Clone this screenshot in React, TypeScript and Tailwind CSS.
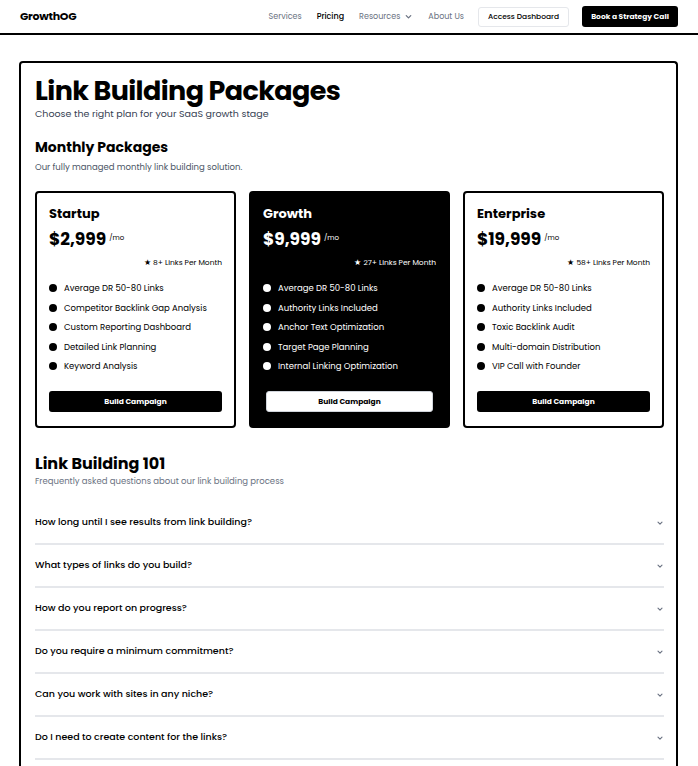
import React from "react";

const font = { fontFamily: "Poppins, 'Open Sans', 'Noto Sans', sans-serif" };

function Chevron({ className = "" }: { className?: string }) {
  return (
    <svg viewBox="0 0 10 10" className={className} fill="none" stroke="currentColor" strokeWidth="1.4" strokeLinecap="round" strokeLinejoin="round">
      <path d="M2.5 4l2.5 2.5L7.5 4" />
    </svg>
  );
}

type Plan = { name: string; price: string; links: string; features: string[]; dark?: boolean };

const plans: Plan[] = [
  {
    name: "Startup",
    price: "$2,999",
    links: "8+ Links Per Month",
    features: ["Average DR 50-80 Links", "Competitor Backlink Gap Analysis", "Custom Reporting Dashboard", "Detailed Link Planning", "Keyword Analysis"],
  },
  {
    name: "Growth",
    price: "$9,999",
    links: "27+ Links Per Month",
    dark: true,
    features: ["Average DR 50-80 Links", "Authority Links Included", "Anchor Text Optimization", "Target Page Planning", "Internal Linking Optimization"],
  },
  {
    name: "Enterprise",
    price: "$19,999",
    links: "58+ Links Per Month",
    features: ["Average DR 50-80 Links", "Authority Links Included", "Toxic Backlink Audit", "Multi-domain Distribution", "VIP Call with Founder"],
  },
];

const faqs = [
  "How long until I see results from link building?",
  "What types of links do you build?",
  "How do you report on progress?",
  "Do you require a minimum commitment?",
  "Can you work with sites in any niche?",
  "Do I need to create content for the links?",
];

function PlanCard({ p }: { p: Plan }) {
  const dark = !!p.dark;
  return (
    <div className={`flex flex-col rounded-[4px] border-2 border-black px-[12px] pt-[12px] pb-[14px] ${dark ? "bg-black text-white" : "bg-white text-black"}`}>
      <div className="text-[13px] font-bold leading-[18px]">{p.name}</div>
      <div className="mt-[5px] flex items-start">
        <span className="text-[17px] font-bold leading-[22px]">{p.price}</span>
        <span className="ml-[3px] mt-[5px] text-[7px] leading-[10px]">/mo</span>
      </div>
      <div className="mt-[7px] flex justify-end text-[7.5px] leading-[12px]">
        <span>★ {p.links}</span>
      </div>
      <ul className="mt-[13px] flex flex-col gap-[7.5px]">
        {p.features.map((f, i) => (
          <li key={i} className="flex items-center gap-[7px] text-[8.5px] leading-[12px]">
            <span className={`inline-block h-[8px] w-[8px] shrink-0 rounded-full ${dark ? "bg-white" : "bg-black"}`} />
            <span>{f}</span>
          </li>
        ))}
      </ul>
      <button
        className={`mt-[19px] h-[21px] rounded-[3px] text-[7.5px] font-bold ${dark ? "mx-[3px] h-[18px] border border-gray-300 bg-white text-black" : "bg-black text-white"}`}
      >
        Build Campaign
      </button>
    </div>
  );
}

export default function App() {
  return (
    <div className="min-h-[766px] bg-white text-black" style={font}>
      <header className="flex h-[35px] items-center justify-between border-b-2 border-black px-[20px]">
        <div className="text-[11px] font-bold tracking-tight">GrowthOG</div>
        <nav className="flex items-center">
          <a className="text-[8px] text-gray-500">Services</a>
          <a className="ml-[15px] text-[8px] font-medium text-black">Pricing</a>
          <a className="ml-[15px] flex items-center gap-[4px] text-[8px] text-gray-500">
            Resources <Chevron className="h-[9px] w-[9px]" />
          </a>
          <a className="ml-[15px] text-[8px] text-gray-500">About Us</a>
          <button className="ml-[14px] flex h-[20px] w-[91px] items-center justify-center rounded-[3px] border border-gray-200 text-[7.5px] font-medium text-black">
            Access Dashboard
          </button>
          <button className="ml-[13px] flex h-[21px] w-[96px] items-center justify-center rounded-[3px] bg-black text-[7.5px] font-bold text-white">
            Book a Strategy Call
          </button>
        </nav>
      </header>

      <main className="px-[19px] pt-[26px] pr-[20px]">
        <div className="rounded-[4px] border-2 border-b-0 border-black pl-[14px] pr-[12px] pt-[12px] pb-[20px]">
          <h1 className="text-[27px] font-bold leading-[31px] tracking-[-0.6px]">Link Building Packages</h1>
          <p className="mt-[1px] text-[9.5px] leading-[13px] text-gray-700">Choose the right plan for your SaaS growth stage</p>

          <h2 className="mt-[17px] text-[14px] font-bold leading-[20px]">Monthly Packages</h2>
          <p className="mt-[4px] text-[8.5px] leading-[12px] text-gray-600">Our fully managed monthly link building solution.</p>

          <div className="mt-[18px] grid grid-cols-3 gap-[13px]">
            {plans.map((p) => (
              <PlanCard key={p.name} p={p} />
            ))}
          </div>

          <h2 className="mt-[25px] text-[16px] font-bold leading-[22px]">Link Building 101</h2>
          <p className="text-[8.5px] leading-[12px] text-gray-500">Frequently asked questions about our link building process</p>

          <div className="mt-[15px] flex flex-col">
            {faqs.map((q) => (
              <div key={q} className="flex h-[43px] items-center justify-between border-b-2 border-gray-200">
                <span className="text-[9.5px] font-medium">{q}</span>
                <Chevron className="h-[8px] w-[8px] text-gray-500" />
              </div>
            ))}
          </div>
        </div>
      </main>
    </div>
  );
}
